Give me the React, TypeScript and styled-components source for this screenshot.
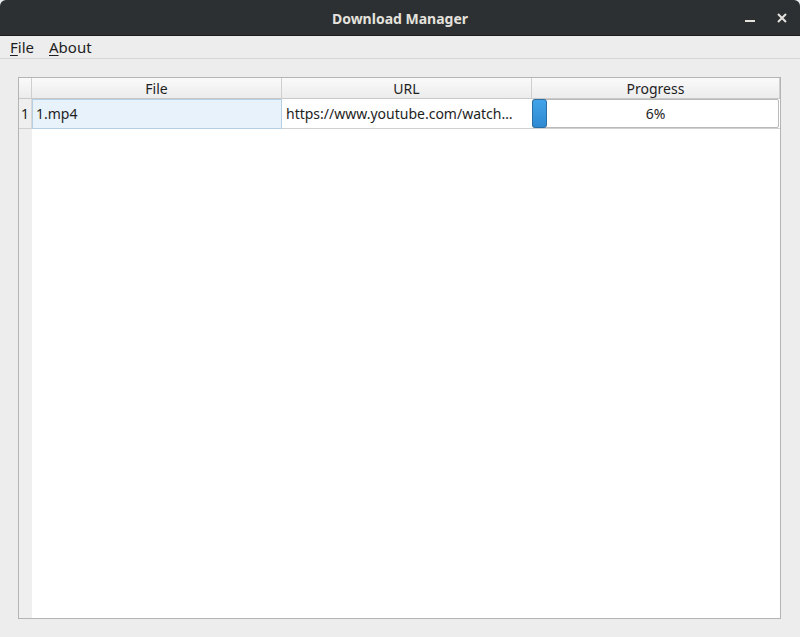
import styled, { createGlobalStyle } from "styled-components";

const GlobalStyle = createGlobalStyle`
  html, body {
    margin: 0;
    padding: 0;
    background: #ededed;
  }
  body {
    font-family: "Noto Sans", "DejaVu Sans", sans-serif;
    font-size: 14px;
    color: #1e1e1e;
  }
`;

const Window = styled.div`
  width: 800px;
  height: 637px;
  display: flex;
  flex-direction: column;
  background: #ededed;
  overflow: hidden;
`;

const TitleBar = styled.div`
  height: 36px;
  flex: none;
  display: flex;
  align-items: center;
  justify-content: center;
  position: relative;
  padding-top: 2px;
  background: #2d3033;
  border-bottom: 1px solid #1b1d1f;
  border-radius: 6px 6px 0 0;
  box-sizing: border-box;
`;

const Title = styled.span`
  color: #e4e2dd;
  font-weight: bold;
  font-size: 14px;
`;

const WindowButtons = styled.div`
  position: absolute;
  right: 13px;
  top: 0;
  height: 36px;
  display: flex;
  align-items: center;
  gap: 22px;
`;

const MenuBar = styled.div`
  height: 22px;
  flex: none;
  display: flex;
  align-items: center;
  gap: 15px;
  padding: 0 10px;
  border-bottom: 1px solid #d6d6d6;
  font-size: 15px;
`;

const MenuItem = styled.span`
  color: #1e1e1e;
  & u {
    text-decoration-thickness: 1px;
    text-underline-offset: 2px;
  }
`;

const Content = styled.div`
  flex: 1;
  padding: 18px;
  display: flex;
`;

const TableFrame = styled.div`
  flex: 1;
  border: 1px solid #b4b4b4;
  background: #ffffff;
  display: grid;
  grid-template-columns: 13px 250px 250px 1fr;
  grid-template-rows: 21px 30px 1fr;
  margin-right: 1px;
`;

const HeaderCell = styled.div`
  background: linear-gradient(#fafafa, #ececec);
  border-right: 1px solid #cfcfcf;
  border-bottom: 1px solid #c8c8c8;
  display: flex;
  align-items: center;
  justify-content: center;
  font-size: 14px;
  box-sizing: border-box;
  &:last-child {
    border-right: none;
  }
`;

const RowHeader = styled.div<{ $filler?: boolean }>`
  background: #efefef;
  border-right: ${({ $filler }) => ($filler ? "none" : "1px solid #d8d8d8")};
  border-bottom: ${({ $filler }) => ($filler ? "none" : "1px solid #d0d0d0")};
  display: flex;
  align-items: center;
  justify-content: center;
  font-size: 14px;
  box-sizing: border-box;
`;

const Cell = styled.div<{ $current?: boolean }>`
  box-sizing: border-box;
  display: flex;
  align-items: center;
  padding: 0 4px;
  white-space: nowrap;
  overflow: hidden;
  font-size: 14px;
  border-bottom: 1px solid #d0d0d0;
  background: ${({ $current }) => ($current ? "#e7f2fb" : "#ffffff")};
  outline: ${({ $current }) => ($current ? "1px solid #b7cfe3" : "none")};
  outline-offset: -1px;
`;

const ProgressCell = styled.div`
  box-sizing: border-box;
  border-bottom: 1px solid #d0d0d0;
  display: flex;
`;

const ProgressTrack = styled.div`
  flex: 1;
  position: relative;
  border: 1px solid #bababa;
  border-radius: 2px;
  background: #ffffff;
  display: flex;
  align-items: center;
  justify-content: center;
  font-size: 14px;
  margin-right: 1px;
`;

const ProgressChunk = styled.div`
  position: absolute;
  left: -1px;
  top: -1px;
  bottom: -1px;
  box-sizing: border-box;
  border: 1px solid #2a6ea6;
  border-radius: 3px;
  background: linear-gradient(#42a3e8, #2f8ad2);
`;

const Filler = styled.div`
  background: #ffffff;
`;

export default function App() {
  const progress = 6;
  return (
    <Window>
      <GlobalStyle />
      <TitleBar>
        <Title>Download Manager</Title>
        <WindowButtons>
          <svg width="10" height="10" viewBox="0 0 10 10">
            <rect x="0" y="7" width="10" height="2" fill="#e4e2dd" />
          </svg>
          <svg width="10" height="10" viewBox="0 0 10 10">
            <path d="M1 1 L9 9 M9 1 L1 9" stroke="#e4e2dd" strokeWidth="2" />
          </svg>
        </WindowButtons>
      </TitleBar>
      <MenuBar>
        <MenuItem>
          <u>F</u>ile
        </MenuItem>
        <MenuItem>
          <u>A</u>bout
        </MenuItem>
      </MenuBar>
      <Content>
        <TableFrame>
          <HeaderCell />
          <HeaderCell>File</HeaderCell>
          <HeaderCell>URL</HeaderCell>
          <HeaderCell>Progress</HeaderCell>

          <RowHeader>1</RowHeader>
          <Cell $current>1.mp4</Cell>
          <Cell>https://www.youtube.com/watch…</Cell>
          <ProgressCell>
            <ProgressTrack>
              <ProgressChunk style={{ width: `${Math.max(progress, 6)}%` }} />
              {progress}%
            </ProgressTrack>
          </ProgressCell>

          <RowHeader $filler />
          <Filler />
          <Filler />
          <Filler />
        </TableFrame>
      </Content>
    </Window>
  );
}
